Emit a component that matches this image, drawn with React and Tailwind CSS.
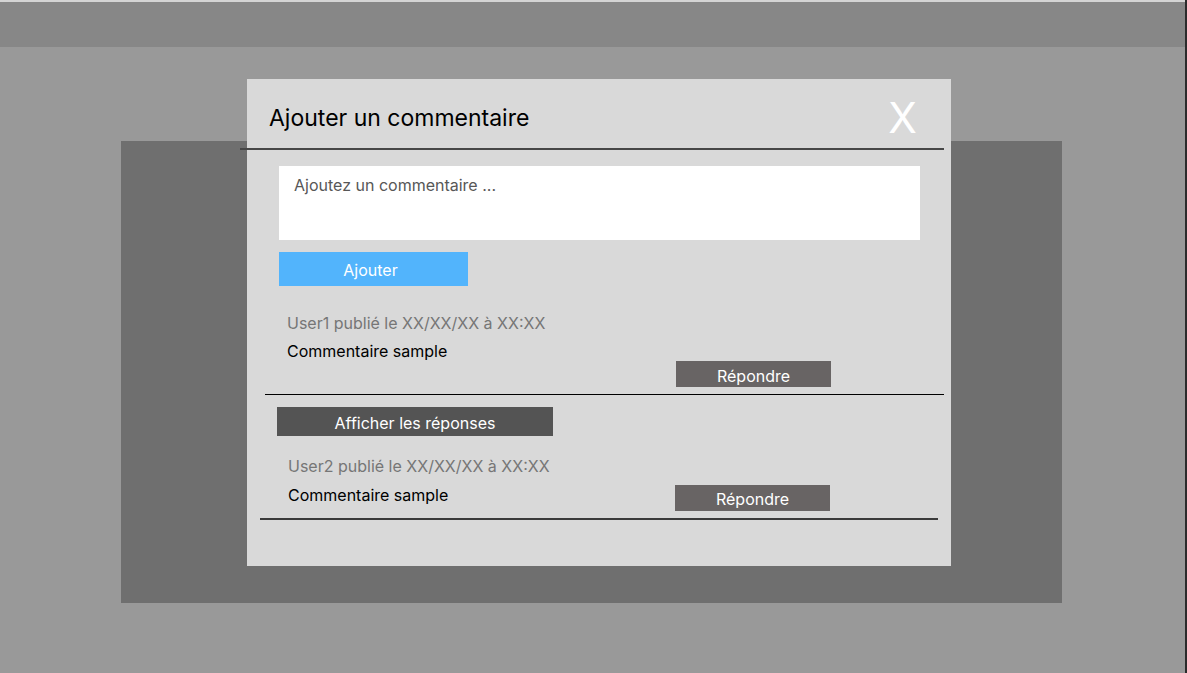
import React from 'react';

const font = { fontFamily: 'Inter, "Noto Sans", sans-serif' };

const App = () => {
    return (
        <div className="flex w-[1187px] h-[673px] overflow-hidden bg-[#999999]" style={font}>
            <div className="relative flex-1 flex flex-col">
                {/* top bar */}
                <div className="h-[47px] bg-[#878787] border-t-2 border-[#d4d4d4]" />

                {/* page content behind the modal */}
                <div className="mt-[94px] ml-[121px] w-[941px] h-[462px] bg-[#6f6f6f]" />

                {/* modal */}
                <div className="absolute left-[247px] top-[79px] w-[704px] h-[487px] bg-[#d9d9d9] flex flex-col">
                    <div className="h-[69px] pt-[8px] pl-[22px] pr-[34px] flex items-center justify-between">
                        <h2 className="text-[23px] leading-[26px] text-black">Ajouter un commentaire</h2>
                        <button className="text-[42px] leading-none text-white">X</button>
                    </div>
                    <div className="h-[2px] -ml-[7px] w-[704px] bg-[#474747]" />

                    <div className="pl-[32px]">
                        <div className="mt-[16px] w-[641px] h-[74px] bg-white pl-[15px] pt-[9px] text-[16px] leading-[20px] text-[#575757]">
                            Ajoutez un commentaire ...
                        </div>
                        <button className="mt-[12px] w-[189px] h-[34px] pt-[2px] pr-[6px] bg-[#52b4fc] text-white text-[16px] leading-[20px]">
                            Ajouter
                        </button>
                    </div>

                    {/* first comment */}
                    <div className="pl-[40px] mt-[27px]">
                        <div className="text-[16px] leading-[20px] text-[#767676]">User1 publié le XX/XX/XX à XX:XX</div>
                        <div className="mt-[8px] text-[16px] leading-[20px] text-black">Commentaire sample</div>
                        <div className="flex">
                            <button className="ml-[389px] w-[155px] h-[26px] pt-[3px] bg-[#686464] text-white text-[16px] leading-[20px]">
                                Répondre
                            </button>
                        </div>
                    </div>
                    <div className="mt-[7px] ml-[18px] w-[679px] h-px bg-black" />

                    <div className="pl-[30px] mt-[12px]">
                        <button className="w-[276px] h-[29px] pt-[3px] bg-[#545454] text-white text-[16px] leading-[20px]">
                            Afficher les réponses
                        </button>
                    </div>

                    {/* second comment */}
                    <div className="pl-[41px] mt-[20px]">
                        <div className="text-[16px] leading-[20px] text-[#767676]">User2 publié le XX/XX/XX à XX:XX</div>
                        <div className="mt-[9px] flex items-start">
                            <div className="w-[387px] text-[16px] leading-[20px] text-black">Commentaire sample</div>
                            <button className="w-[155px] h-[26px] pt-[1px] bg-[#686464] text-white text-[16px] leading-[20px]">
                                Répondre
                            </button>
                        </div>
                    </div>
                    <div className="mt-[7px] ml-[13px] w-[678px] h-[2px] bg-[#3a3a3a]" />
                </div>
            </div>
            <div className="w-[2px] bg-[#2b2b2b]" />
        </div>
    );
};

export default App;
